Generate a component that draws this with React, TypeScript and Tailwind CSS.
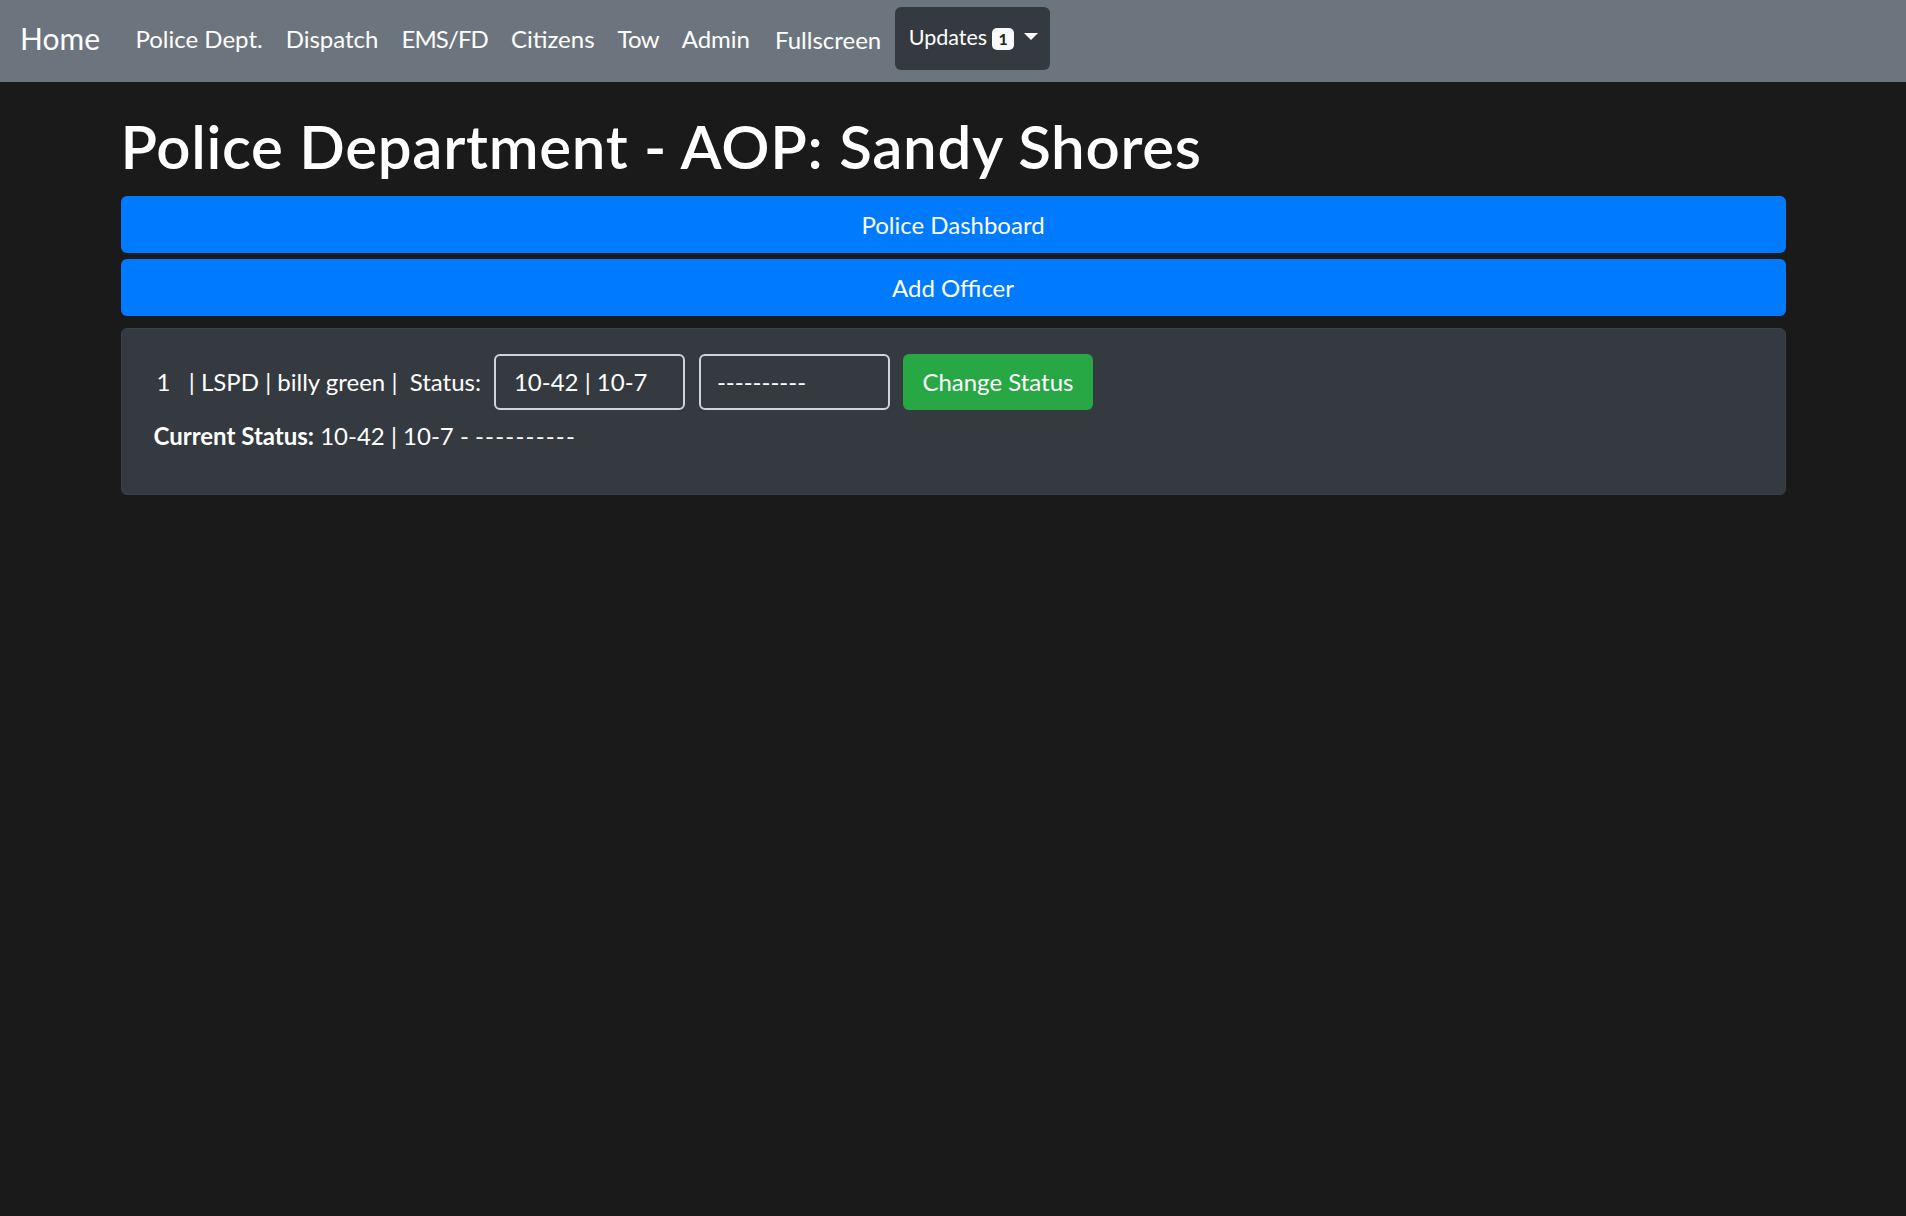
import React from 'react';

const navLinks = [
  { label: 'Police Dept.', cls: '' },
  { label: 'Dispatch', cls: '' },
  { label: 'EMS/FD', cls: 'tracking-[-0.9px]' },
  { label: 'Citizens', cls: '' },
  { label: 'Tow', cls: 'tracking-[-0.8px]' },
  { label: 'Admin', cls: '' },
];

export default function App() {
  return (
    <div className="min-h-[1216px] bg-[#1a1a1a] text-white font-['Lato','Open_Sans',sans-serif]">
      <nav className="h-[82px] bg-[#6c757d] flex items-center pl-[20px]">
        <a href="#" className="text-[30px] leading-[45px] mr-[24px] text-white -mt-[6px]">
          Home
        </a>
        {navLinks.map((link) => (
          <a
            key={link.label}
            href="#"
            className={`px-[11.5px] text-[24px] leading-[36px] text-white -mt-[5px] ${link.cls}`}
          >
            {link.label}
          </a>
        ))}
        <a href="#" className="ml-[2px] px-[11.5px] text-[24px] leading-[36px] text-white -mt-[3px]">
          Fullscreen
        </a>
        <button
          type="button"
          className="ml-[2px] h-[63px] mt-[-5px] flex items-center bg-[#343a40] rounded-[6px] pl-[14px] pr-[12px] text-[21.5px] text-white"
        >
          <span className="-mt-[3px]">Updates</span>
          <span className="ml-[5px] w-[22px] h-[22px] rounded-[5px] bg-[#f8f9fa] text-[#212529] text-[16px] font-bold flex items-center justify-center">
            1
          </span>
          <span className="ml-[10px] -mt-[4px] w-0 h-0 border-t-[7px] border-t-white border-x-[7px] border-x-transparent" />
        </button>
      </nav>

      <main className="w-[1665px] mx-auto pt-[28px]">
        <h1 className="text-[60px] leading-[72px] font-semibold tracking-[0.7px] mb-[14px]">
          Police Department - AOP: Sandy Shores
        </h1>

        <div className="flex flex-col gap-[6px]">
          <button type="button" className="h-[57px] w-full bg-[#007bff] rounded-[6px] text-[24px] text-white">
            Police Dashboard
          </button>
          <button type="button" className="h-[57px] w-full bg-[#007bff] rounded-[6px] text-[24px] text-white">
            Add Officer
          </button>
        </div>

        <div className="mt-[12px] bg-[#343a40] border border-[#3b4148] rounded-[6px] pl-[32px] pr-[30px] pt-[25px] pb-[40px]">
          <div className="flex items-center text-[24px]">
            <span className="whitespace-pre ml-[3px]">1   | LSPD | billy green |  Status:</span>
            <div className="ml-[13px] w-[191px] h-[56px] border-2 border-[#ced4da] rounded-[6px] flex items-center px-[18px]">
              10-42 | 10-7
            </div>
            <div className="ml-[14px] w-[191px] h-[56px] border-2 border-[#ced4da] rounded-[6px] flex items-center px-[16px]">
              ----------
            </div>
            <button
              type="button"
              className="ml-[13px] w-[190px] h-[56px] bg-[#28a745] rounded-[6px] text-[24px] text-white"
            >
              Change Status
            </button>
          </div>
          <p className="mt-[8px] text-[24px] leading-[36px]">
            <span className="font-bold">Current Status:</span> 10-42 | 10-7 - <span className="tracking-[1.2px]">----------</span>
          </p>
        </div>
      </main>
    </div>
  );
}
